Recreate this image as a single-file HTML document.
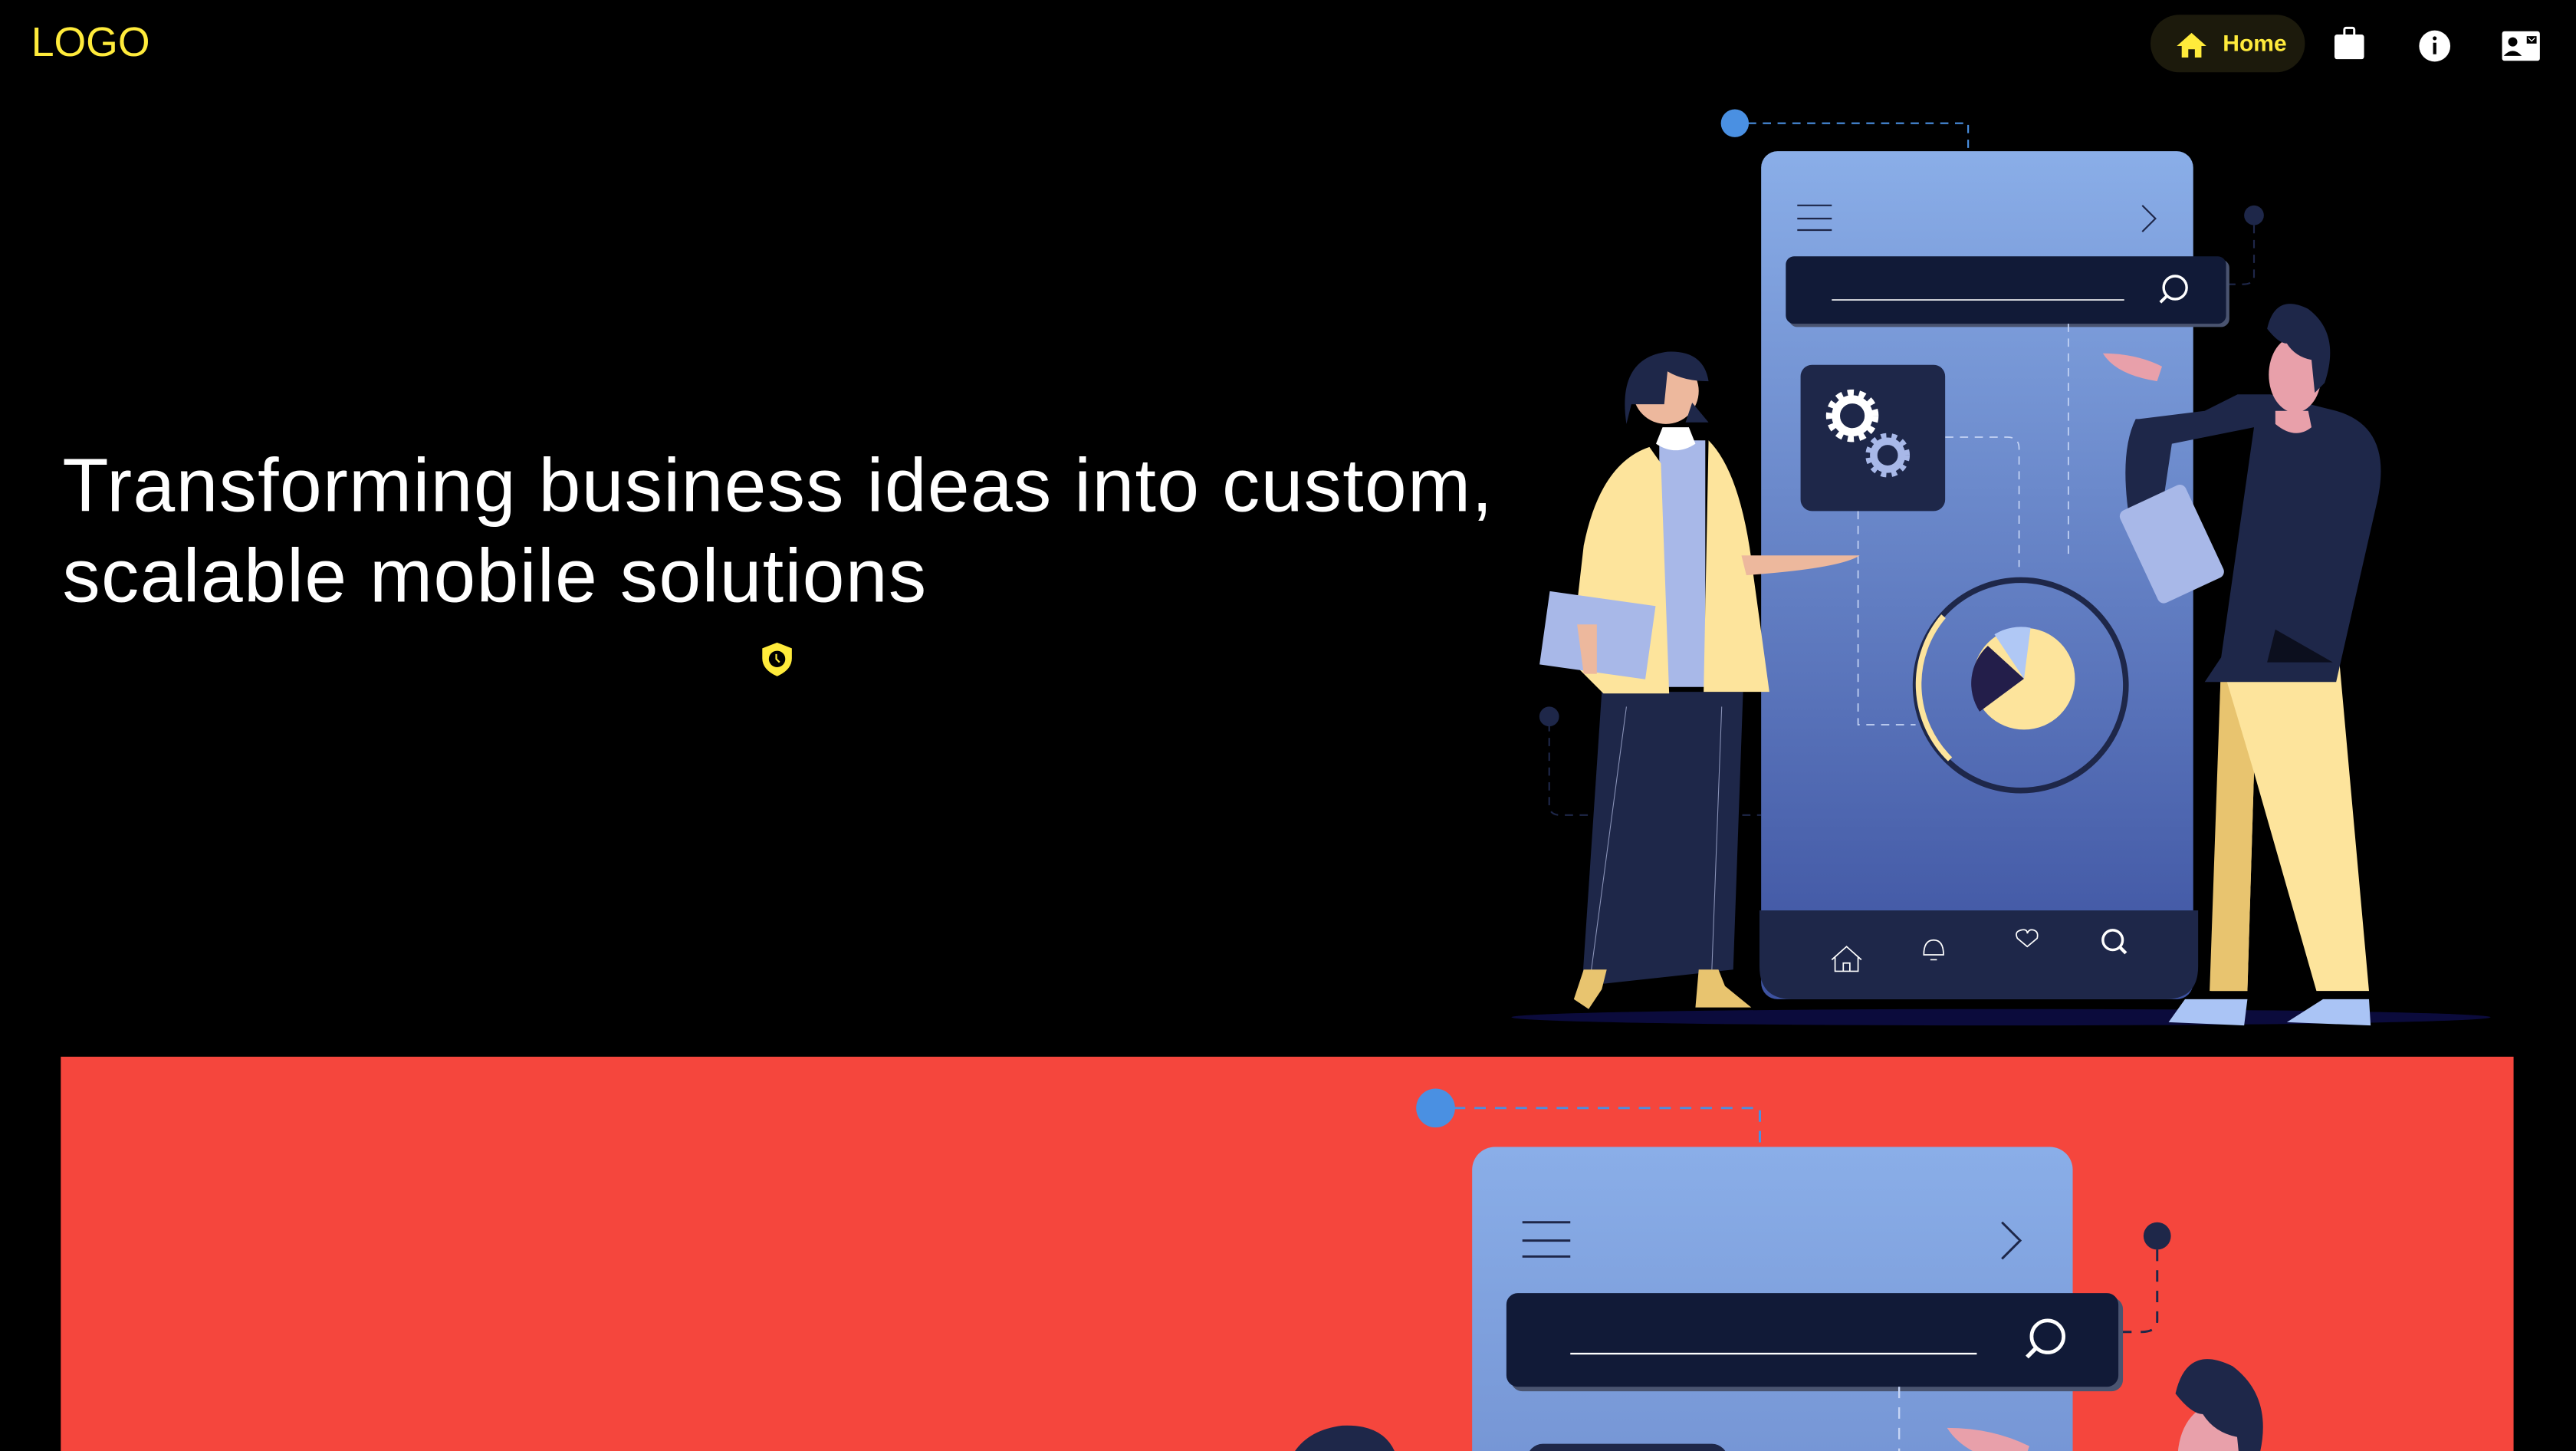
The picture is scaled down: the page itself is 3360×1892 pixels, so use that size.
<!DOCTYPE html>
<html><head><meta charset="utf-8">
<style>
html,body{margin:0;padding:0;background:#000;overflow:hidden;width:3360px;height:1892px}
#w{position:absolute;left:0;top:0;width:1568px;height:883px;overflow:hidden;transform:scale(2.142857);transform-origin:0 0;font-family:"Liberation Sans",sans-serif}
.logo{position:absolute;left:19px;top:12px;color:#ffeb3b;font-size:25px}
.pill{position:absolute;left:1309px;top:9px;width:94px;height:35px;border-radius:18px;background:#1c1a0c}
.home{position:absolute;left:1353px;top:18px;color:#ffeb3b;font-weight:bold;font-size:14px}
h1{position:absolute;left:38px;top:268px;margin:0;color:#fff;font-weight:normal;font-size:46px;line-height:55px;letter-spacing:0.6px;white-space:nowrap}
.red{position:absolute;left:37px;top:643px;width:1493px;height:240px;background:#f5463d}
svg{position:absolute;left:0;top:0}
</style></head><body><div id="w">
<div class="logo">LOGO</div>
<div class="pill"></div>
<div class="home">Home</div>
<h1>Transforming business ideas into custom,<br>scalable mobile solutions</h1>
<div class="red"></div>
<svg width="1568" height="883" viewBox="0 0 1568 883">
<defs>
<linearGradient id="pg" x1="0" y1="0" x2="0" y2="1"><stop offset="0" stop-color="#8aaee8"/><stop offset="1" stop-color="#3d52a0"/></linearGradient>
<clipPath id="rc"><rect x="37" y="643" width="1493" height="240"/></clipPath>
<g id="ill">
<ellipse cx="1218" cy="619" rx="298" ry="5" fill="#0b0b3c"/>
<path d="M1064 75H1198V92" fill="none" stroke="#4a90e2" stroke-width="1" stroke-dasharray="5 4"/>
<circle cx="1056" cy="75" r="8.5" fill="#4a90e2"/>
<path d="M943 440V490Q943 496 950 496H1072" fill="none" stroke="#1e2749" stroke-width="1" stroke-dasharray="5 4"/>
<circle cx="943" cy="436" r="6" fill="#1e2749"/>
<path d="M1372 137V168Q1372 173 1365 173H1356" fill="none" stroke="#1e2749" stroke-width="1" stroke-dasharray="5 4"/>
<circle cx="1372" cy="131" r="6" fill="#1e2749"/>
<rect x="1072" y="92" width="263" height="516" rx="10" fill="url(#pg)"/>
<path d="M1094 125h21M1094 133h21M1094 140h21M1304 125l8 8-8 8" stroke="#1e2749" stroke-width="1" fill="none"/>
<rect x="1089" y="158" width="268" height="41" rx="5" fill="#4a5470"/>
<rect x="1087" y="156" width="268" height="41" rx="5" fill="#111a37"/>
<path d="M1115 182.5h178" stroke="#fff" stroke-width="0.8"/>
<circle cx="1324" cy="175" r="7" fill="none" stroke="#fff" stroke-width="1.6"/>
<path d="M1319 180l-4 4" stroke="#fff" stroke-width="1.8"/>
<path d="M1131 311V441H1166M1184 266H1222Q1229 266 1229 273V345M1259 197V340" fill="none" stroke="#c5d4f5" stroke-width="0.8" stroke-dasharray="5 4"/>
<rect x="1096" y="222" width="88" height="89" rx="7" fill="#1e2749"/>
<circle cx="1127.5" cy="253" r="13" fill="none" stroke="#fff" stroke-width="6" stroke-dasharray="3.5 3"/>
<circle cx="1127.5" cy="253" r="10" fill="none" stroke="#fff" stroke-width="5"/>
<circle cx="1149" cy="277" r="11" fill="none" stroke="#a8b8e8" stroke-width="5" stroke-dasharray="3 3"/>
<circle cx="1149" cy="277" r="8.5" fill="none" stroke="#a8b8e8" stroke-width="4.5"/>
<ellipse cx="1230" cy="417" rx="64" ry="64" fill="none" stroke="#1e2749" stroke-width="3.5"/>
<path d="M1183 375A64 64 0 0 0 1187 462" fill="none" stroke="#fde49c" stroke-width="3.5"/>
<circle cx="1232" cy="413" r="31" fill="#fde49c"/>
<path d="M1232 413L1205 433A31 31 0 0 1 1210 393Z" fill="#231e4a"/>
<path d="M1232 413L1214 386A31 31 0 0 1 1236 382Z" fill="#b0c8f5"/>
<path d="M1071 554H1338V588Q1338 608 1318 608H1091Q1071 608 1071 588Z" fill="#1e2749"/>
<g fill="none" stroke="#fff" stroke-width="0.8">
<path d="M1115 584l9-8 9 8M1117 582v9h14v-9M1122 591v-5h4v5"/>
<path d="M1171 581q0-9 6-9t6 9h-12zM1175 584h4"/>
<path d="M1234 576l-6-5q-2-4 2-5t4 2q1-3 4-2t2 5z"/>
</g>
<circle cx="1286" cy="572" r="6" fill="none" stroke="#fff" stroke-width="1.6"/><path d="M1290 576l4 4" stroke="#fff" stroke-width="2"/>
<path d="M963 600L975 421H1061L1055 590Z" fill="#1e2749"/>
<path d="M990 430L968 595M1048 430L1042 590" stroke="#8a93b8" stroke-width="0.5"/>
<path d="M964 590h14l-3 12 -8 12 -9-6z" fill="#e8c46f"/>
<path d="M1034 590h12l4 10 16 13h-34z" fill="#e8c46f"/>
<path d="M1010 268h28v150h-28z" fill="#a8b8e8"/>
<path d="M1004 272q-30 10-40 60l-8 70 20 20h40l-5-140zM1040 268q20 20 27 80l10 73h-40z" fill="#fde49c"/>
<path d="M1060 338L1132 338Q1120 346 1063 350Z" fill="#edb89d"/>
<rect x="940" y="364" width="65" height="45" fill="#a8b8e8" transform="rotate(8 972 386)"/>
<path d="M960 380h12v30h-8z" fill="#edb89d"/>
<circle cx="1014" cy="238" r="20" fill="#edb89d"/>
<path d="M990 258q-6-40 25-44 22-1 25 18 -15 0 -25-6l-2 20h-20z" fill="#1e2749"/>
<path d="M1030 245l10 12h-14z" fill="#1e2749"/>
<path d="M1008 270q12 8 24 0l-4-10h-16z" fill="#fff"/>
<path d="M1352 403H1424L1442 603H1410L1372 470 1368 603H1346Z" fill="#fde49c"/>
<path d="M1352 403L1345 603H1368L1372 470Z" fill="#e8c46f"/>
<path d="M1320 622l10-14h38l-2 16zM1392 622l22-14h28l1 16z" fill="#aac4f5"/>
<path d="M1300 255q-10 20-4 60l20 -5 6-40 50-10 -20 140 -10 15h80l25-110q10-45-25-55l-40-10h-20l-20 10-40 5z" fill="#1e2749"/>
<path d="M1380 403h40l-35-20z" fill="#0c0f1e"/>
<rect x="1300" y="300" width="44" height="62" rx="4" fill="#a8b8e8" transform="rotate(-25 1322 331)"/>
<path d="M1280 215q20 0 36 8l-3 9q-25-4-33-17z" fill="#e8a0aa"/>
<path d="M1385 258q12 10 22 2l-2-10h-20z" fill="#e8a0aa"/>
<ellipse cx="1397" cy="228" rx="16" ry="23" fill="#e8a0aa"/>
<path d="M1380 200q5-22 25-12 20 15 10 45l-6 6 -2-20q-10-2 -15-10 -5 0 -12-9z" fill="#1e2749"/>
</g>
</defs>
<use href="#ill"/>
<g clip-path="url(#rc)"><use href="#ill" transform="translate(-594 570) scale(1.39)"/></g>
<path d="M1334 20l-9 8h3v7h4v-5h4v5h4v-7h3z" fill="#ffeb3b"/>
<rect x="1421" y="21" width="18" height="15" rx="1.5" fill="#fff"/>
<rect x="1427" y="17" width="6" height="5" rx="1" fill="none" stroke="#fff" stroke-width="1.4"/>
<circle cx="1482" cy="28" r="9.5" fill="#fff"/>
<rect x="1481" y="26" width="2" height="7" fill="#000"/><circle cx="1482" cy="23.3" r="1.2" fill="#000"/>
<rect x="1523" y="19" width="23" height="18" rx="1.5" fill="#fff"/>
<circle cx="1529.5" cy="25.5" r="2.8" fill="#000"/><path d="M1524 34q5.5-6 11 0z" fill="#000"/>
<rect x="1538" y="22" width="6" height="4.5" fill="#000"/><path d="M1539 23l2 2 2-2" stroke="#fff" stroke-width="0.6" fill="none"/>
<path d="M473 391l-9 3.5v6q0 7 9 11 9-4 9-11v-6z" fill="#ffeb3b"/>
<circle cx="473" cy="401" r="5" fill="#000"/><path d="M472.5 398v3l2 2" stroke="#ffeb3b" stroke-width="1" fill="none"/>
</svg>
</div></body></html>
